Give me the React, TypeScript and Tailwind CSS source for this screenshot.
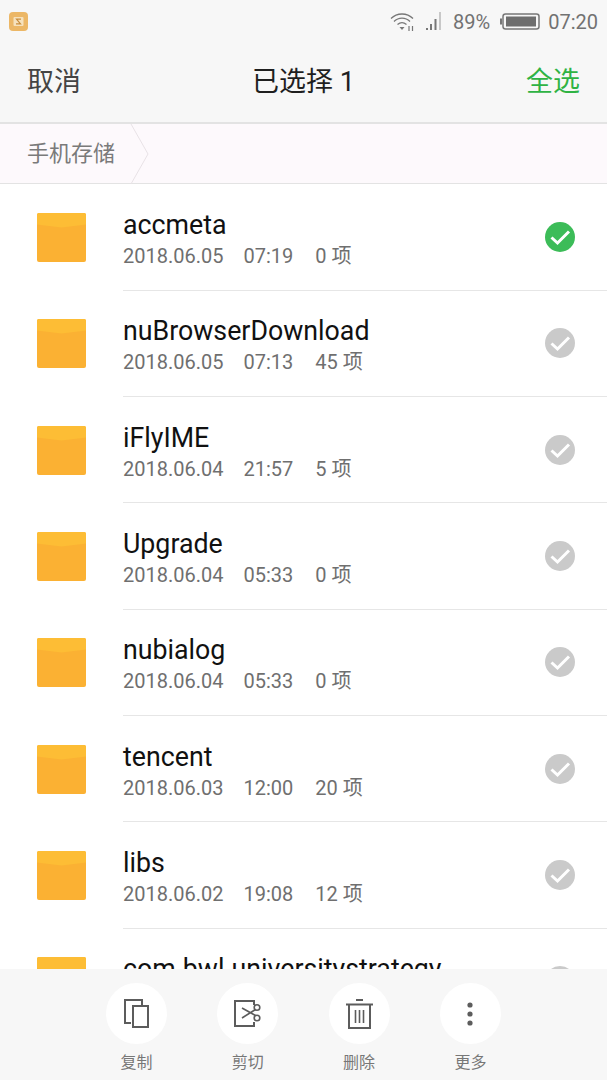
const FONT = 'font-["Roboto","Noto_Sans_CJK_SC",sans-serif]';

const rows = [
  { name: "accmeta", date: "2018.06.05", time: "07:19", n: "0 项", on: true },
  { name: "nuBrowserDownload", date: "2018.06.05", time: "07:13", n: "45 项" },
  { name: "iFlyIME", date: "2018.06.04", time: "21:57", n: "5 项" },
  { name: "Upgrade", date: "2018.06.04", time: "05:33", n: "0 项" },
  { name: "nubialog", date: "2018.06.04", time: "05:33", n: "0 项" },
  { name: "tencent", date: "2018.06.03", time: "12:00", n: "20 项" },
  { name: "libs", date: "2018.06.02", time: "19:08", n: "12 项" },
  { name: "com.bwl.universitystrategy", date: "2018.06.02", time: "18:40", n: "3 项" },
];

function Folder() {
  return (
    <svg width="49" height="49" viewBox="0 0 49 49">
      <rect x="0" y="0" width="49" height="49" rx="2" fill="#fbb133" />
      <path d="M0 2a2 2 0 0 1 2-2h45a2 2 0 0 1 2 2v9.5L24.5 14.5 0 11.5z" fill="#fdbd35" />
    </svg>
  );
}

function Check({ on }: { on?: boolean }) {
  return (
    <svg width="30" height="30" viewBox="0 0 30 30">
      <circle cx="15" cy="15" r="15" fill={on ? "#3cbc58" : "#cacaca"} />
      <path d="M6.5 15.5 12.5 21 24 9.5" fill="none" stroke="#fff" strokeWidth="3" />
    </svg>
  );
}

function Action({ label, children }: { label: string; children: React.ReactNode }) {
  return (
    <div className="flex flex-col items-center w-[61px]">
      <div className="w-[61px] h-[61px] rounded-full bg-white flex items-center justify-center">{children}</div>
      <span className="mt-[7px] text-[16px] leading-[24px] text-[#777]">{label}</span>
    </div>
  );
}

export default function App() {
  return (
    <div className={`${FONT} w-[607px] h-[1080px] overflow-hidden flex flex-col bg-white`}>
      <div className="h-[122px] shrink-0 bg-[#f7f7f7] flex flex-col">
        <div className="h-[42px] flex items-center pl-[9px] pr-[9px]">
          <svg width="19" height="19" viewBox="0 0 19 19">
            <rect width="19" height="19" rx="4" fill="#ecb766" />
            <rect x="4.5" y="5" width="10" height="9" rx="1" fill="#f6e2bd" />
            <path d="M12 7.2H7.5L11.5 11.8H7" fill="none" stroke="#c98d3c" strokeWidth="1.2" />
          </svg>
          <div className="ml-auto flex items-center text-[#727272]">
            <svg width="26" height="21" viewBox="0 0 26 21" fill="none" stroke="#777" strokeWidth="1.3">
              <path d="M1 7.5C7 1.5 17 1.5 23 7.5" />
              <path d="M4 10.5C8.5 6 15.5 6 20 10.5" />
              <path d="M7.5 13.5C10.5 11 13.5 11 16.5 13.5" />
              <path d="M9.5 16h5l-2.5 3z" fill="#777" stroke="none" />
              <path d="M19 15v5M22.5 15v5" strokeWidth="1.2" />
            </svg>
            <svg className="ml-[9px]" width="18" height="22" viewBox="0 0 18 22">
              <rect x="1" y="18" width="2" height="2" fill="#777" />
              <rect x="5" y="14" width="2" height="6" fill="#777" />
              <rect x="9.5" y="9" width="2" height="11" fill="#777" />
              <rect x="14" y="2" width="2" height="18" fill="#c8c8c8" />
            </svg>
            <span className="ml-[10px] text-[20px] pt-[1px]">89%</span>
            <svg className="ml-[10px]" width="40" height="17" viewBox="0 0 40 17">
              <rect x="0" y="5.5" width="2" height="6" fill="#777" />
              <rect x="3" y="1" width="36" height="15" rx="2.5" fill="none" stroke="#777" strokeWidth="1.5" />
              <rect x="6" y="3.5" width="30" height="10" fill="#6e6e6e" />
            </svg>
            <span className="ml-[8px] text-[20px] pt-[1px]">07:20</span>
          </div>
        </div>
        <div className="flex-1 flex items-center justify-between pl-[27px] pr-[27px] pt-[1px]">
          <span className="text-[27px] text-[#444]">取消</span>
          <span className="text-[27px] text-[#1f1f1f]">已选择 1</span>
          <span className="text-[27px] text-[#2fb344]">全选</span>
        </div>
      </div>

      <div className="h-[62px] shrink-0 bg-[#fdf9fc] border-y border-y-[#e3e3e3] border-t-2 flex items-center">
        <span className="pl-[27px] text-[22px] text-[#7a7a7a]">手机存储</span>
        <svg className="ml-[15px]" width="19" height="60" viewBox="0 0 19 60" fill="none" stroke="#e8e2e6" strokeWidth="1">
          <path d="M1 0 18 30 1 60" />
        </svg>
      </div>

      <div className="flex-1 min-h-0 overflow-hidden pt-[0.34px]">
        {rows.map((r) => (
          <div key={r.name} className="h-[106.33px] flex">
            <div className="w-[123px] shrink-0 flex pl-[37px] pt-[28.66px]">
              <Folder />
            </div>
            <div className="flex-1 min-w-0 flex border-b border-b-[#e6e6e6] pr-[32px]">
              <div className="flex-1 min-w-0 pt-[23.66px]">
                <div className="text-[26.75px] leading-[34px] text-[#111] whitespace-nowrap">{r.name}</div>
                <div className="flex text-[20px] leading-[28px] text-[#6f6f6f] whitespace-nowrap">
                  <span>{r.date}</span>
                  <span className="ml-[20px]">{r.time}</span>
                  <span className="ml-[22px]">{r.n}</span>
                </div>
              </div>
              <div className="pt-[37.66px]">
                <Check on={r.on} />
              </div>
            </div>
          </div>
        ))}
      </div>

      <div className="h-[111px] shrink-0 bg-[#f7f7f7] flex pt-[14px] pl-[106px] gap-[50.3px]">
        <Action label="复制">
          <svg width="26" height="29" viewBox="0 0 26 29" fill="none" stroke="#5c5c5c" strokeWidth="2">
            <path d="M7 24H1V1h17v6" />
            <rect x="9" y="7" width="15" height="21" />
          </svg>
        </Action>
        <Action label="剪切">
          <svg width="27" height="27" viewBox="0 0 27 27" fill="none" stroke="#5c5c5c" strokeWidth="2">
            <path d="M20 5V1H1v25h19v-4" />
            <path d="M8 8 21.5 15.5M8 18 21.5 9.5" strokeWidth="1.6" />
            <circle cx="23" cy="7.5" r="2.8" strokeWidth="1.6" />
            <circle cx="23" cy="18" r="2.8" strokeWidth="1.6" />
          </svg>
        </Action>
        <Action label="删除">
          <svg width="27" height="30" viewBox="0 0 27 30" fill="none" stroke="#5c5c5c" strokeWidth="2">
            <path d="M0 5.5h27M10 1h7" />
            <path d="M3 6v23h21V6" />
            <path d="M9.5 11v13M13.5 11v13M17.5 11v13" strokeWidth="1.6" />
          </svg>
        </Action>
        <Action label="更多">
          <svg width="6" height="24" viewBox="0 0 6 24" fill="#5c5c5c">
            <circle cx="3" cy="3" r="2.6" />
            <circle cx="3" cy="12" r="2.6" />
            <circle cx="3" cy="21" r="2.6" />
          </svg>
        </Action>
      </div>
    </div>
  );
}
